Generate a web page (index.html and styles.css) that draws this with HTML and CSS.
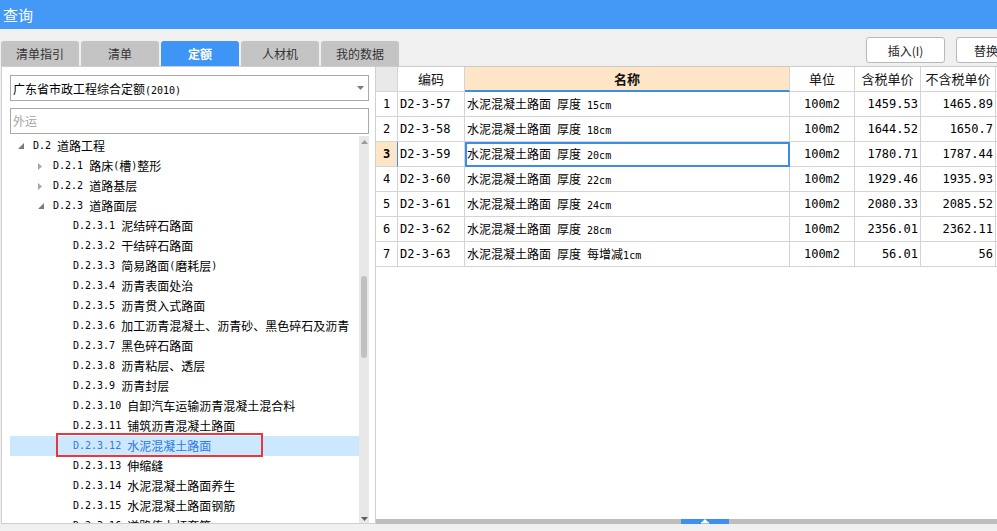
FILE: index.html
```html
<!DOCTYPE html>
<html lang="zh-CN">
<head>
<meta charset="utf-8">
<title>查询</title>
<link rel="stylesheet" href="styles.css">
</head>
<body>
<div class="titlebar">查询</div>
<div class="main">
  <div class="left">
    <div class="tabs">
      <div class="tab">清单指引</div>
      <div class="tab">清单</div>
      <div class="tab active">定额</div>
      <div class="tab">人材机</div>
      <div class="tab">我的数据</div>
    </div>
    <div class="lpanel">
      <div class="select">
        <span class="seltext">广东省市政工程综合定额<span class="n">(2010)</span></span>
        <svg class="caret" width="7" height="4" viewBox="0 0 7 4"><path d="M0 0H7L3.5 4Z" fill="#7d7d7d"/></svg>
      </div>
      <div class="search">外运</div>
      <div class="treewrap">
        <div class="tree">
          <div class="node l0"><span class="tg"><svg width="6" height="6" viewBox="0 0 6 6"><path d="M6 0V6H0Z" fill="#7a7a7a"/></svg></span><span class="n">D.2 </span>道路工程</div>
          <div class="node l1"><span class="tg"><svg width="4" height="7" viewBox="0 0 4 7"><path d="M0 0L4 3.5L0 7Z" fill="#a6a6a6"/></svg></span><span class="n">D.2.1 </span>路床<span class="n">(</span>槽<span class="n">)</span>整形</div>
          <div class="node l1"><span class="tg"><svg width="4" height="7" viewBox="0 0 4 7"><path d="M0 0L4 3.5L0 7Z" fill="#a6a6a6"/></svg></span><span class="n">D.2.2 </span>道路基层</div>
          <div class="node l1"><span class="tg"><svg width="6" height="6" viewBox="0 0 6 6"><path d="M6 0V6H0Z" fill="#7a7a7a"/></svg></span><span class="n">D.2.3 </span>道路面层</div>
          <div class="node l2"><span class="tg"></span><span class="n">D.2.3.1 </span>泥结碎石路面</div>
          <div class="node l2"><span class="tg"></span><span class="n">D.2.3.2 </span>干结碎石路面</div>
          <div class="node l2"><span class="tg"></span><span class="n">D.2.3.3 </span>简易路面<span class="n">(</span>磨耗层<span class="n">)</span></div>
          <div class="node l2"><span class="tg"></span><span class="n">D.2.3.4 </span>沥青表面处治</div>
          <div class="node l2"><span class="tg"></span><span class="n">D.2.3.5 </span>沥青贯入式路面</div>
          <div class="node l2"><span class="tg"></span><span class="n">D.2.3.6 </span>加工沥青混凝土、沥青砂、黑色碎石及沥青</div>
          <div class="node l2"><span class="tg"></span><span class="n">D.2.3.7 </span>黑色碎石路面</div>
          <div class="node l2"><span class="tg"></span><span class="n">D.2.3.8 </span>沥青粘层、透层</div>
          <div class="node l2"><span class="tg"></span><span class="n">D.2.3.9 </span>沥青封层</div>
          <div class="node l2"><span class="tg"></span><span class="n">D.2.3.10 </span>自卸汽车运输沥青混凝土混合料</div>
          <div class="node l2"><span class="tg"></span><span class="n">D.2.3.11 </span>铺筑沥青混凝土路面</div>
          <div class="node l2 sel"><span class="tg"></span><span class="n">D.2.3.12 </span>水泥混凝土路面<span class="redbox"></span></div>
          <div class="node l2"><span class="tg"></span><span class="n">D.2.3.13 </span>伸缩缝</div>
          <div class="node l2"><span class="tg"></span><span class="n">D.2.3.14 </span>水泥混凝土路面养生</div>
          <div class="node l2"><span class="tg"></span><span class="n">D.2.3.15 </span>水泥混凝土路面钢筋</div>
          <div class="node l2"><span class="tg"></span><span class="n">D.2.3.16 </span>道路传力杆套筒</div>
        </div>
        <div class="vscroll">
          <div class="sbtn"><svg width="7" height="4" viewBox="0 0 7 4"><path d="M3.5 0L7 4H0Z" fill="#9a9a9a"/></svg></div>
          <div class="track"><div class="thumb"></div></div>
          <div class="sbtn down"><svg width="7" height="4" viewBox="0 0 7 4"><path d="M0 0H7L3.5 4Z" fill="#5f5f5f"/></svg></div>
        </div>
      </div>
    </div>
  </div>
  <div class="right">
    <div class="rinner">
      <div class="toolbar">
        <button class="btn insert">插入(I)</button>
        <button class="btn replace">替换</button>
      </div>
      <div class="tablearea">
        <div class="grid">
          <div class="c h rn"></div>
          <div class="c h">编码</div>
          <div class="c h name">名称</div>
          <div class="c h">单位</div>
          <div class="c h">含税单价</div>
          <div class="c h">不含税单价</div>
          <div class="c h last"></div>

          <div class="c rn n">1</div><div class="c code n">D2-3-57</div><div class="c txt">水泥混凝土路面<span class="n"> </span>厚度<span class="n"> 15cm</span></div><div class="c unit n">100m2</div><div class="c num n">1459.53</div><div class="c num n">1465.89</div><div class="c last"></div>
          <div class="c rn n">2</div><div class="c code n">D2-3-58</div><div class="c txt">水泥混凝土路面<span class="n"> </span>厚度<span class="n"> 18cm</span></div><div class="c unit n">100m2</div><div class="c num n">1644.52</div><div class="c num n">1650.7</div><div class="c last"></div>
          <div class="c rn n cur">3</div><div class="c code n">D2-3-59</div><div class="c txt focus">水泥混凝土路面<span class="n"> </span>厚度<span class="n"> 20cm</span></div><div class="c unit n">100m2</div><div class="c num n">1780.71</div><div class="c num n">1787.44</div><div class="c last"></div>
          <div class="c rn n">4</div><div class="c code n">D2-3-60</div><div class="c txt">水泥混凝土路面<span class="n"> </span>厚度<span class="n"> 22cm</span></div><div class="c unit n">100m2</div><div class="c num n">1929.46</div><div class="c num n">1935.93</div><div class="c last"></div>
          <div class="c rn n">5</div><div class="c code n">D2-3-61</div><div class="c txt">水泥混凝土路面<span class="n"> </span>厚度<span class="n"> 24cm</span></div><div class="c unit n">100m2</div><div class="c num n">2080.33</div><div class="c num n">2085.52</div><div class="c last"></div>
          <div class="c rn n">6</div><div class="c code n">D2-3-62</div><div class="c txt">水泥混凝土路面<span class="n"> </span>厚度<span class="n"> 28cm</span></div><div class="c unit n">100m2</div><div class="c num n">2356.01</div><div class="c num n">2362.11</div><div class="c last"></div>
          <div class="c rn n">7</div><div class="c code n">D2-3-63</div><div class="c txt">水泥混凝土路面<span class="n"> </span>厚度<span class="n"> </span>每增减<span class="n">1cm</span></div><div class="c unit n">100m2</div><div class="c num n">56.01</div><div class="c num n">56</div><div class="c last"></div>
        </div>
      </div>
      <div class="hbar">
        <div class="handle"><svg width="8" height="5" viewBox="0 0 8 5"><path d="M4 0L7 3H1Z" fill="#fff"/><rect x="0" y="3" width="8" height="1.5" fill="#fff"/></svg></div>
      </div>
    </div>
  </div>
</div>
</body>
</html>
```

FILE: styles.css
```css
* {
  box-sizing: border-box;
  margin: 0;
  padding: 0;
}

body {
  width: 997px;
  height: 531px;
  overflow: hidden;
  background: #f0f0f0;
  font-family: "Noto Sans CJK SC", "Noto Sans", sans-serif;
  color: #000;
}

.n {
  font-family: "DejaVu Sans Mono", "Liberation Mono", monospace;
  font-size: 10px;
  white-space: pre;
}

.titlebar {
  height: 29px;
  background: #4499f7;
  color: #fff;
  font-size: 15px;
  line-height: 29px;
  padding-left: 3px;
}

.main {
  display: flex;
  height: 502px;
}

/* ---------- left column ---------- */
.left {
  width: 376px;
  flex: none;
  padding: 12px 0 0 1px;
  display: flex;
  flex-direction: column;
}

.tabs {
  display: flex;
  gap: 2px;
  height: 25px;
}

.tab {
  width: 78px;
  flex: none;
  background: #c4c4c4;
  border-radius: 3px 3px 0 0;
  font-size: 12px;
  color: #333;
  text-align: center;
  line-height: 25px;
}

.tab.active {
  background: #3f95f6;
  color: #fff;
  font-weight: bold;
}

.lpanel {
  height: 458px;
  border: 1px solid #cfcfcf;
  background: #fff;
  padding: 8px 6px 0 8px;
  display: flex;
  flex-direction: column;
}

.select {
  height: 26px;
  flex: none;
  border: 1px solid #a9a9a9;
  display: flex;
  align-items: center;
  padding-left: 2px;
  font-size: 12px;
}

.seltext {
  white-space: nowrap;
}

.caret {
  margin-left: auto;
  margin-right: 4px;
  margin-top: -1px;
}

.search {
  height: 26px;
  flex: none;
  margin-top: 7px;
  border: 1px solid #a9a9a9;
  padding-left: 2px;
  font-size: 12px;
  line-height: 24px;
  color: #a5a5a5;
}

.treewrap {
  margin-top: 2px;
  height: 387px;
  display: flex;
}

.tree {
  flex: 1;
  overflow: hidden;
}

.node {
  height: 20px;
  line-height: 20px;
  display: flex;
  align-items: center;
  white-space: nowrap;
  font-size: 12px;
  position: relative;
}

.node.l0 { padding-left: 6px; }
.node.l1 { padding-left: 26px; }
.node.l2 { padding-left: 46px; }

.tg {
  width: 17px;
  flex: none;
  display: flex;
  align-items: center;
  padding-left: 2px;
}

.node.sel {
  background: #cce8ff;
  color: #2c7be0;
}

.redbox {
  position: absolute;
  left: 46px;
  top: -3px;
  width: 207px;
  height: 24px;
  border: 2px solid #e8383d;
}

.vscroll {
  width: 10px;
  flex: none;
  background: #e8e8e8;
  display: flex;
  flex-direction: column;
}

.sbtn {
  height: 12px;
  display: flex;
  align-items: center;
  justify-content: center;
  padding-left: 1px;
}

.sbtn.down {
  align-items: flex-end;
  padding-bottom: 2px;
}

.track {
  flex: 1;
}

.thumb {
  margin-top: 128px;
  margin-left: 2px;
  width: 6px;
  height: 82px;
  border-radius: 3px;
  background: #c1c1c1;
}

/* ---------- right column ---------- */
.right {
  flex: 1;
  overflow: hidden;
}

.rinner {
  width: 658px;
  display: flex;
  flex-direction: column;
}

.toolbar {
  height: 37px;
  display: flex;
  justify-content: flex-end;
  align-items: flex-start;
  gap: 11px;
  padding-top: 8px;
  padding-right: 18px;
}

.btn {
  height: 26px;
  border: 1px solid #b9b9b9;
  border-radius: 3px;
  background: #fff;
  font-family: "Noto Sans CJK SC", sans-serif;
  font-size: 12px;
  color: #222;
}

.btn.insert {
  width: 79px;
}

.btn.replace {
  width: 60px;
}

.tablearea {
  height: 453px;
  background: #fff;
  border-top: 1px solid #cacaca;
}

.grid {
  display: grid;
  grid-template-columns: 22px 67px 325px 65px 66px 75px 1fr;
  grid-auto-rows: 25px;
}

.c {
  border-right: 1px solid #d4d4d4;
  border-bottom: 1px solid #d4d4d4;
  line-height: 24px;
  font-size: 12px;
  white-space: nowrap;
  overflow: hidden;
}

.c.h {
  font-size: 13px;
  text-align: center;
  color: #111;
}

.c.h.rn {
  background: #e9e9e9;
}

.c.h.name {
  background: #fde5c6;
  border-bottom: 2px solid #3b8de8;
  font-weight: bold;
}

.c.last {
  border-right: none;
}

.c.rn {
  text-align: center;
}

.c.rn.cur {
  background: #fde5c6;
  font-weight: bold;
  border-right-color: #3b8de8;
}

.c.code {
  padding-left: 2px;
}

.c.txt {
  padding-left: 2px;
}

.c.txt.focus {
  outline: 2px solid #3b8de8;
  outline-offset: -2px;
}

.c.unit {
  text-align: center;
}

.c.num {
  text-align: right;
  padding-right: 2px;
}

.hbar {
  height: 5px;
  background: #bebebe;
  display: flex;
  justify-content: center;
}

.handle {
  width: 48px;
  background: #3d8ff2;
  display: flex;
  align-items: center;
  justify-content: center;
}
```
